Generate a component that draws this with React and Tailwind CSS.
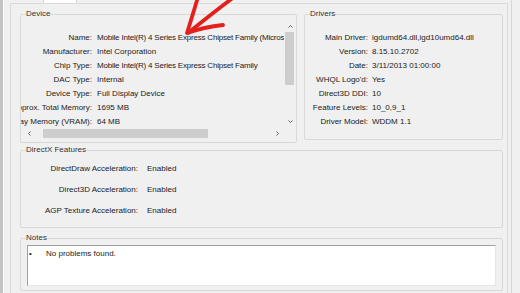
import React from "react";

function Chevron({ dir }) {
  const paths = {
    up: "M1.5 4.5 L3.5 2.5 L5.5 4.5",
    down: "M1.5 2.5 L3.5 4.5 L5.5 2.5",
    left: "M4.5 1.5 L2.5 3.5 L4.5 5.5",
    right: "M2.5 1.5 L4.5 3.5 L2.5 5.5",
  };
  return (
    <svg width="7" height="7" viewBox="0 0 7 7">
      <path d={paths[dir]} fill="none" stroke="#606060" strokeWidth="1" />
    </svg>
  );
}

const deviceRows = [
  ["Name:", "Mobile Intel(R) 4 Series Express Chipset Family (Microsoft Corporation - WDDM 1.1)", true],
  ["Manufacturer:", "Intel Corporation"],
  ["Chip Type:", "Mobile Intel(R) 4 Series Express Chipset Family", true],
  ["DAC Type:", "Internal"],
  ["Device Type:", "Full Display Device"],
  ["Approx. Total Memory:", "1695 MB"],
  ["Display Memory (VRAM):", "64 MB"],
];

const driverRows = [
  ["Main Driver:", "igdumd64.dll,igd10umd64.dll"],
  ["Version:", "8.15.10.2702"],
  ["Date:", "3/11/2013 01:00:00"],
  ["WHQL Logo'd:", "Yes"],
  ["Direct3D DDI:", "10"],
  ["Feature Levels:", "10_0,9_1"],
  ["Driver Model:", "WDDM 1.1"],
];

const dxRows = [
  ["DirectDraw Acceleration:", "Enabled"],
  ["Direct3D Acceleration:", "Enabled"],
  ["AGP Texture Acceleration:", "Enabled"],
];

function Legend({ children }) {
  return <legend className="ml-[5px] px-0 leading-[12px] text-[#333]">{children}</legend>;
}

export default function App() {
  return (
    <div className="relative w-[520px] h-[293px] overflow-hidden bg-[#f0f0f0] flex font-['Liberation_Sans',Arial,sans-serif] text-[8px] text-[#222]">
      <div className="w-[3px] bg-[#c4c4c4]" />
      <div className="w-px bg-white" />
      <div className="w-[6px]" />
      <div className="w-[498px] flex flex-col">
        <div className="h-[3px] flex">
          <div className="ml-[33px] w-[34px] bg-white border-x border-[#d9d9d9]" />
        </div>
        <div className="flex-1 border-t border-x border-[#d9d9d9] pl-[9px] pr-[4px] pt-[4px]">
          <div className="flex items-start gap-[7px]">
            {/* Device */}
            <fieldset className="w-[277px] border border-[#d9d9d9] rounded-[2px]">
              <Legend>Device</Legend>
              <div className="grid grid-cols-[263px_12px] grid-rows-[107px_13px] pb-[2px]">
                <div className="overflow-hidden pt-[11px]">
                  {deviceRows.map(([l, v, tight]) => (
                    <div key={l} className="h-[14px] flex items-center whitespace-nowrap">
                      <div className="w-[71px] shrink-0 flex justify-end">
                        <span className="whitespace-nowrap">{l}</span>
                      </div>
                      <span className={tight ? "ml-[5px] whitespace-nowrap tracking-[-0.2px]" : "ml-[5px] whitespace-nowrap"}>{v}</span>
                    </div>
                  ))}
                </div>
                <div className="flex flex-col">
                  <div className="h-[12px] flex items-center justify-center">
                    <Chevron dir="up" />
                  </div>
                  <div className="flex-1">
                    <div className="ml-[1px] w-[9px] h-[53px] bg-[#cdcdcd]" />
                  </div>
                  <div className="h-[12px] flex items-center justify-center">
                    <Chevron dir="down" />
                  </div>
                </div>
                <div className="flex items-center">
                  <div className="w-[17px] h-full flex items-center justify-center">
                    <Chevron dir="left" />
                  </div>
                  <div className="flex-1 h-full flex items-center">
                    <div className="ml-[5px] w-[165px] h-[9px] bg-[#cdcdcd]" />
                  </div>
                  <div className="w-[14px] h-full flex items-center justify-center">
                    <Chevron dir="right" />
                  </div>
                </div>
                <div />
              </div>
            </fieldset>
            {/* Drivers */}
            <fieldset className="w-[199px] border border-[#d9d9d9] rounded-[2px]">
              <Legend>Drivers</Legend>
              <div className="pt-[11px] pb-[10px]">
                {driverRows.map(([l, v]) => (
                  <div key={l} className="h-[14px] flex items-center whitespace-nowrap">
                    <div className="w-[63px] shrink-0 flex justify-end">
                      <span className="whitespace-nowrap">{l}</span>
                    </div>
                    <span className="ml-[4px] whitespace-nowrap">{v}</span>
                  </div>
                ))}
              </div>
            </fieldset>
          </div>
          {/* DirectX Features */}
          <fieldset className="mt-[1px] w-[483px] border border-[#d9d9d9] rounded-[2px]">
            <Legend>DirectX Features</Legend>
            <div className="pt-[2px] pb-[6px]">
              {dxRows.map(([l, v]) => (
                <div key={l} className="h-[21px] flex items-center whitespace-nowrap">
                  <div className="w-[117px] shrink-0 flex justify-end">
                    <span className="whitespace-nowrap">{l}</span>
                  </div>
                  <span className="ml-[9px]">{v}</span>
                </div>
              ))}
            </div>
          </fieldset>
          {/* Notes */}
          <fieldset className="mt-[4px] w-[483px] border border-[#d9d9d9] rounded-[2px]">
            <Legend>Notes</Legend>
            <div className="pt-[1px] px-[6px] pb-[4px]">
              <div className="h-[41px] bg-white border border-t-[#a0a0a0] border-l-[#a0a0a0] border-r-[#e6e6e6] border-b-[#e6e6e6] pt-[2px] flex items-start">
                <span className="ml-[1px] w-[17px] leading-[12px]">•</span>
                <span className="leading-[12px]">No problems found.</span>
              </div>
            </div>
          </fieldset>
        </div>
      </div>
      <div className="w-[3px]" />
      <div className="w-px bg-[#d6d6d6]" />
      <div className="flex-1" />
      <svg
        className="absolute left-0 top-0 pointer-events-none"
        width="520"
        height="293"
        viewBox="0 0 520 293"
      >
        <g fill="none" stroke="#e3201c" strokeWidth="3.8" strokeLinecap="round" strokeLinejoin="round">
          <path d="M234 -3 Q214 12 188 33" />
          <path d="M198 -3 Q193 14 187 33 Q204 27 223 25" />
        </g>
      </svg>
    </div>
  );
}
